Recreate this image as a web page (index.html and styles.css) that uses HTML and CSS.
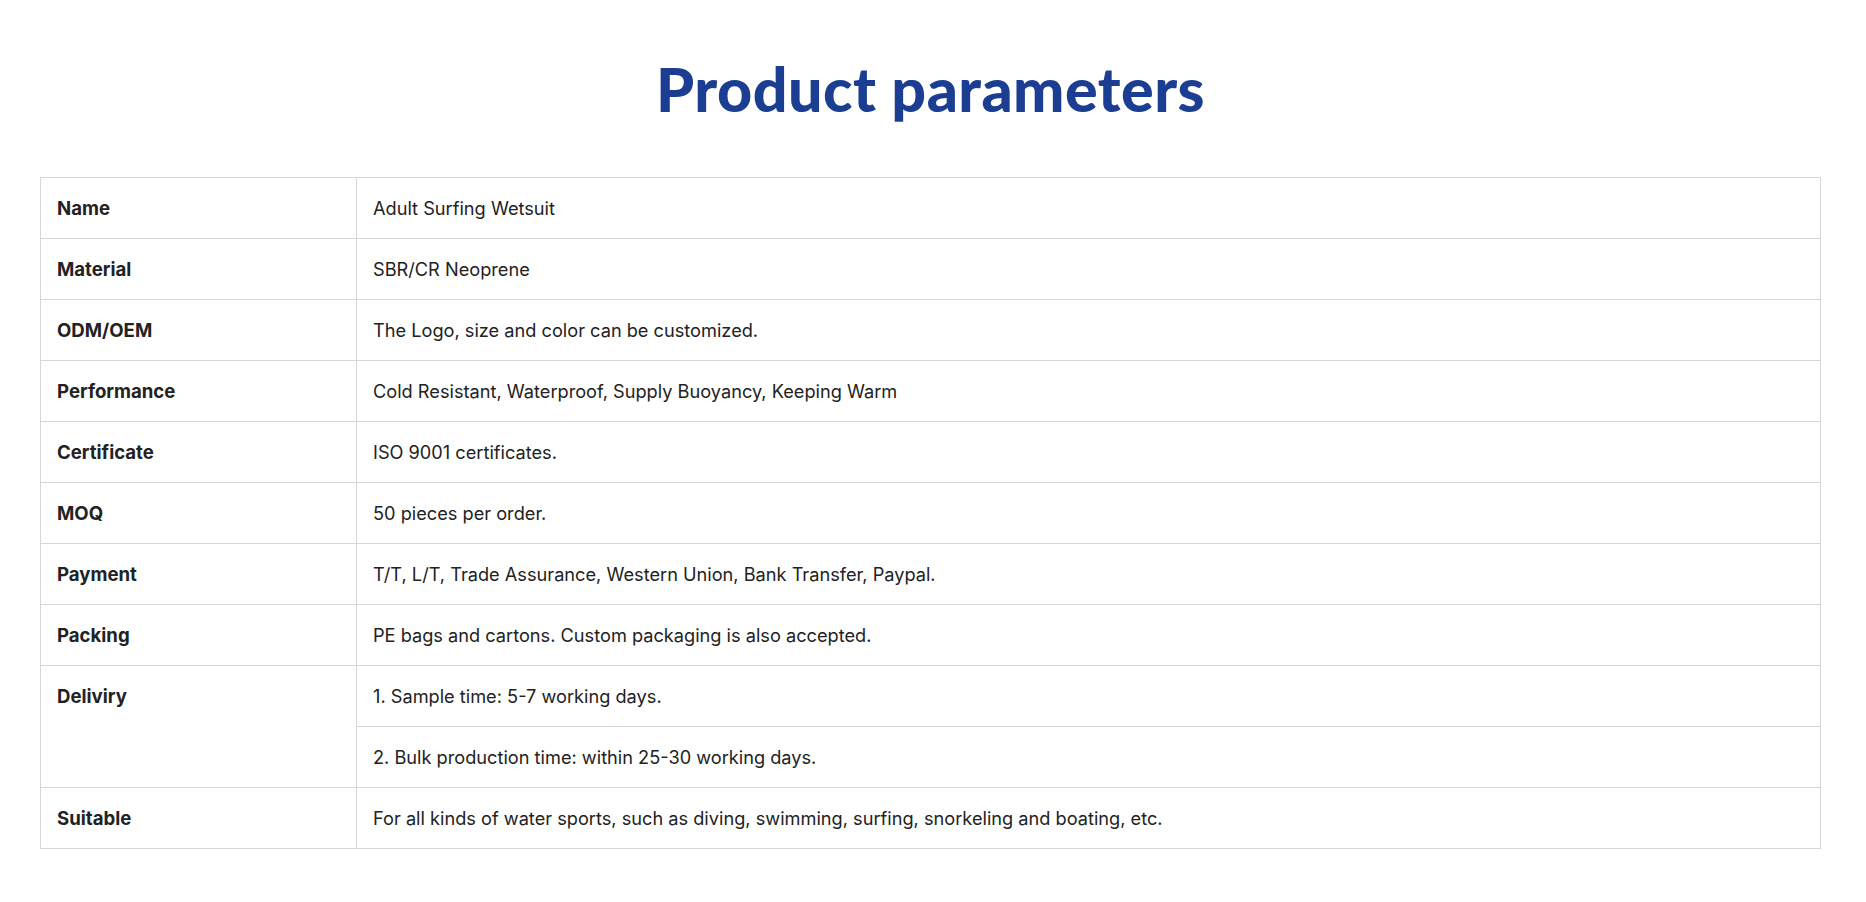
FILE: index.html
```html
<!DOCTYPE html>
<html lang="en">
<head>
<meta charset="utf-8">
<title>Product parameters</title>
<link rel="stylesheet" href="styles.css">
</head>
<body>
<section class="params">
  <h1 class="params-title">Product parameters</h1>
  <table class="params-table">
    <colgroup><col class="col-label"><col></colgroup>
    <tbody>
      <tr><th>Name</th><td>Adult Surfing Wetsuit</td></tr>
      <tr><th>Material</th><td>SBR/CR Neoprene</td></tr>
      <tr><th>ODM/OEM</th><td>The Logo, size and color can be customized.</td></tr>
      <tr><th>Performance</th><td>Cold Resistant, Waterproof, Supply Buoyancy, Keeping Warm</td></tr>
      <tr><th>Certificate</th><td>ISO 9001 certificates.</td></tr>
      <tr><th>MOQ</th><td>50 pieces per order.</td></tr>
      <tr><th>Payment</th><td>T/T, L/T, Trade Assurance, Western Union, Bank Transfer, Paypal.</td></tr>
      <tr><th>Packing</th><td>PE bags and cartons. Custom packaging is also accepted.</td></tr>
      <tr><th rowspan="2">Deliviry</th><td>1. Sample time: 5-7 working days.</td></tr>
      <tr><td>2. Bulk production time: within 25-30 working days.</td></tr>
      <tr><th>Suitable</th><td>For all kinds of water sports, such as diving, swimming, surfing, snorkeling and boating, etc.</td></tr>
    </tbody>
  </table>
</section>
</body>
</html>
```

FILE: styles.css
```css
html, body {
  margin: 0;
  padding: 0;
  background: #ffffff;
}
body {
  font-family: Inter, "Noto Sans", "Liberation Sans", sans-serif;
  color: #222222;
}
.params {
  padding: 0 45px 54px 40px;
}
.params-title {
  margin: 0;
  padding: 46px 0 46px 0;
  text-align: center;
  font-family: Lato, "Liberation Sans", sans-serif;
  font-weight: 900;
  font-size: 61px;
  line-height: 85px;
  color: #1b3e92;
  letter-spacing: 0.45px;
}
.params-table {
  width: 100%;
  border-collapse: collapse;
  table-layout: fixed;
  font-size: 18.2px;
  line-height: 20px;
}
.col-label {
  width: 316px;
}
.params-table th,
.params-table td {
  border: 1px solid #d6d6d6;
  padding: 20px 16px;
  text-align: left;
  vertical-align: top;
  height: 20px;
}
.params-table th {
  font-weight: 700;
  font-size: 18.6px;
  color: #222222;
}
.params-table td {
  font-weight: 400;
  color: #222222;
}
```
